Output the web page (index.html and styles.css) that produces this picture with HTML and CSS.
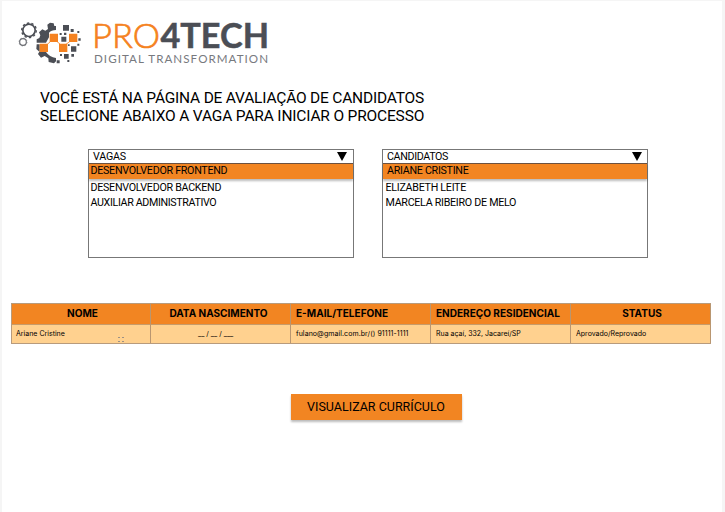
FILE: index.html
```
<!DOCTYPE html>
<html lang="pt-BR">
<head>
<meta charset="utf-8">
<title>PRO4TECH</title>
<link rel="stylesheet" href="styles.css">
</head>
<body>
<main class="page">
  <svg class="logo" width="270" height="65" viewBox="0 0 270 65">
    <g transform="scale(.33333)">
      <circle cx="57" cy="61" r="18.5" fill="none" stroke="#4b4e55" stroke-width="5"/>
      <circle cx="57" cy="61" r="22" fill="none" stroke="#4b4e55" stroke-width="4" stroke-dasharray="7 6.8"/>
      <circle cx="39" cy="96" r="10" fill="none" stroke="#6a6c72" stroke-width="3.5"/>
      <circle cx="39" cy="96" r="12" fill="none" stroke="#6a6c72" stroke-width="2" stroke-dasharray="4 5.4"/>
      <path fill="#4b4e55" d="M138 48V60Q124 60 117 68V82L108 98H80V88L88 84L91 76L87 67L97 58L106 62L114 57L112 44L120 38L131 40L133 48ZM80 103H89V126H108Q118 141 138 144V154L132 160L116 156L115 145L104 138L93 143L84 132L88 125L79 117Z"/>
      <path fill="none" stroke="#f58220" stroke-width="2.5" d="M112 103L122 94M139 93L151 103M168 103L180 94"/>
      <path fill="#f58220" d="M119 71h25v25h-25zM89 101h25v25H89zM147 101h25v25h-25zM177 71h25v25h-25z"/>
      <path fill="#4b4e55" d="M159 45h18v17h-18zM154 80h15v15h-15zM183 109h16v16h-16zM162 132h14v14h-14zM149 69h6v6h-6zM162 68h7v7h-7zM182 57h9v9h-9zM202 63h6v6h-6zM205 85h7v7h-7zM202 101h6v6h-6zM174 103h5v5h-5zM184 132h8v8h-8zM150 132h6v6h-6zM140 151h9v9h-9zM172 150h6v6h-6z"/>
    </g>
    <text class="brand-light" x="82" y="38" textLength="68" lengthAdjust="spacingAndGlyphs">PRO</text>
    <text class="brand-bold" x="150.5" y="38" textLength="108.5" lengthAdjust="spacingAndGlyphs">4TECH</text>
    <text class="tagline" x="84" y="53.3" textLength="174">DIGITAL TRANSFORMATION</text>
  </svg>
  <h1 class="title"><span class="t1">VOCÊ ESTÁ NA PÁGINA DE AVALIAÇÃO DE CANDIDATOS</span><br><span class="t2">SELECIONE ABAIXO A VAGA PARA INICIAR O PROCESSO</span></h1>
  <section class="lists">
    <div class="list">
      <div class="head"><span>VAGAS</span><svg width="10" height="9"><path d="M0 0H10L5 9Z"/></svg></div>
      <div class="item selected">DESENVOLVEDOR FRONTEND</div>
      <div class="item">DESENVOLVEDOR BACKEND</div>
      <div class="item tight">AUXILIAR ADMINISTRATIVO</div>
    </div>
    <div class="list candidates">
      <div class="head"><span>CANDIDATOS</span><svg width="10" height="9"><path d="M0 0H10L5 9Z"/></svg></div>
      <div class="item selected">ARIANE CRISTINE</div>
      <div class="item">ELIZABETH LEITE</div>
      <div class="item">MARCELA RIBEIRO DE MELO</div>
    </div>
  </section>
  <section class="table">
    <div class="th name">NOME</div><div class="th born">DATA NASCIMENTO</div><div class="th left">E-MAIL/TELEFONE</div><div class="th left">ENDEREÇO RESIDENCIAL</div><div class="th status">STATUS</div>
    <div class="td name">Ariane Cristine<svg class="grip" width="6" height="6"><path d="M0 0h2v1H0zM4 0h2v1H4zM0 4h2v1H0zM4 4h2v1H4z"/></svg></div><div class="td date">__ / __ / ___</div><div class="td contact">fulano@gmail.com.br/() 91111-1111</div><div class="td">Rua açaí, 332, Jacareí/SP</div><div class="td">Aprovado/Reprovado</div>
  </section>
  <button class="action">VISUALIZAR CURRÍCULO</button>
</main>
</body>
</html>
```
FILE: styles.css
```
* { box-sizing: border-box; }
body { margin: 0; background: #f5f5f5; color: #000; font-family: Roboto, sans-serif; }
.page { width: 720px; height: 511px; margin: 1px 0 0 2px; padding: 9px 0 0 8px; background: #fff; display: flow-root; }
.logo { display: block; }
.brand-light, .brand-bold { font-family: Lato, sans-serif; font-size: 34px; }
.brand-light { fill: #f58220; font-weight: 300; stroke: #f58220; stroke-width: .7px; }
.brand-bold { fill: #4b4e55; font-weight: 700; stroke: #4b4e55; stroke-width: .5px; }
.tagline { font-family: Lato, sans-serif; font-size: 11.6px; font-weight: 400; fill: #77797e; }
.title { margin: 14px 0 0 30px; font-size: 15.5px; line-height: 18px; font-weight: 400; white-space: nowrap; }
.t1 { letter-spacing: -.2px; }
.t2 { letter-spacing: -.17px; }
.lists { display: flex; gap: 28px; margin: 24px 0 0 78px; }
.list { width: 266px; height: 109px; border: 1px solid #777; font-size: 10.7px; white-space: nowrap; }
.head { display: flex; justify-content: space-between; align-items: center; height: 13px; padding: 0 6px 0 4px; letter-spacing: -.2px; }
.candidates .head { letter-spacing: -.38px; }
.candidates .head { padding-right: 5px; letter-spacing: -.35px; }
.item { height: 15px; line-height: 15px; padding-left: 1.5px; letter-spacing: -.28px; }
.tight { letter-spacing: -.36px; }
.selected { height: 16px; line-height: 14px; margin-bottom: 1px; background: #f28522; border-top: 1px solid #6c5140; box-shadow: 0 2px 2px #0004; }
.selected + .item { margin-top: 1px; }
.candidates .item { padding-left: 2.5px; }
.candidates .selected { padding-left: 4px; }
.table { display: grid; grid-template-columns: 139px repeat(4, 140px); width: 700px; margin: 45px 0 0 1px; border: solid #b89b7c; border-width: 1px 0 1px 1px; font-family: Inter, sans-serif; }
.th, .td { border-right: 1px solid #b99670; white-space: nowrap; }
.th { height: 20px; line-height: 19px; background: #f28522; text-align: center; font-size: 10.05px; font-weight: 700; padding-left: 2px; }
.born { padding: 0 4px 0 0; }
.left { text-align: left; padding-left: 5px; }
.status { padding-left: 3px; }
.td { height: 19px; line-height: 18px; padding-left: 5px; background: #ffd18f; font-size: 7px; position: relative; border-top: 1px solid #c79b69; }
.td.name { padding-left: 4px; }
.th.name { padding-left: 3px; }
.contact { letter-spacing: .07px; }
.date { padding-left: 47px; }
.grip { position: absolute; left: 106px; bottom: 0; fill: #9c9185; }
.action { display: block; width: 171px; height: 26px; margin: 50px 0 0 281px; padding: 0 1px 2px 0; border: 0; background: #f28522; font: 12.5px Roboto, sans-serif; color: #000; box-shadow: 0 2px 2px #0004; }
```
